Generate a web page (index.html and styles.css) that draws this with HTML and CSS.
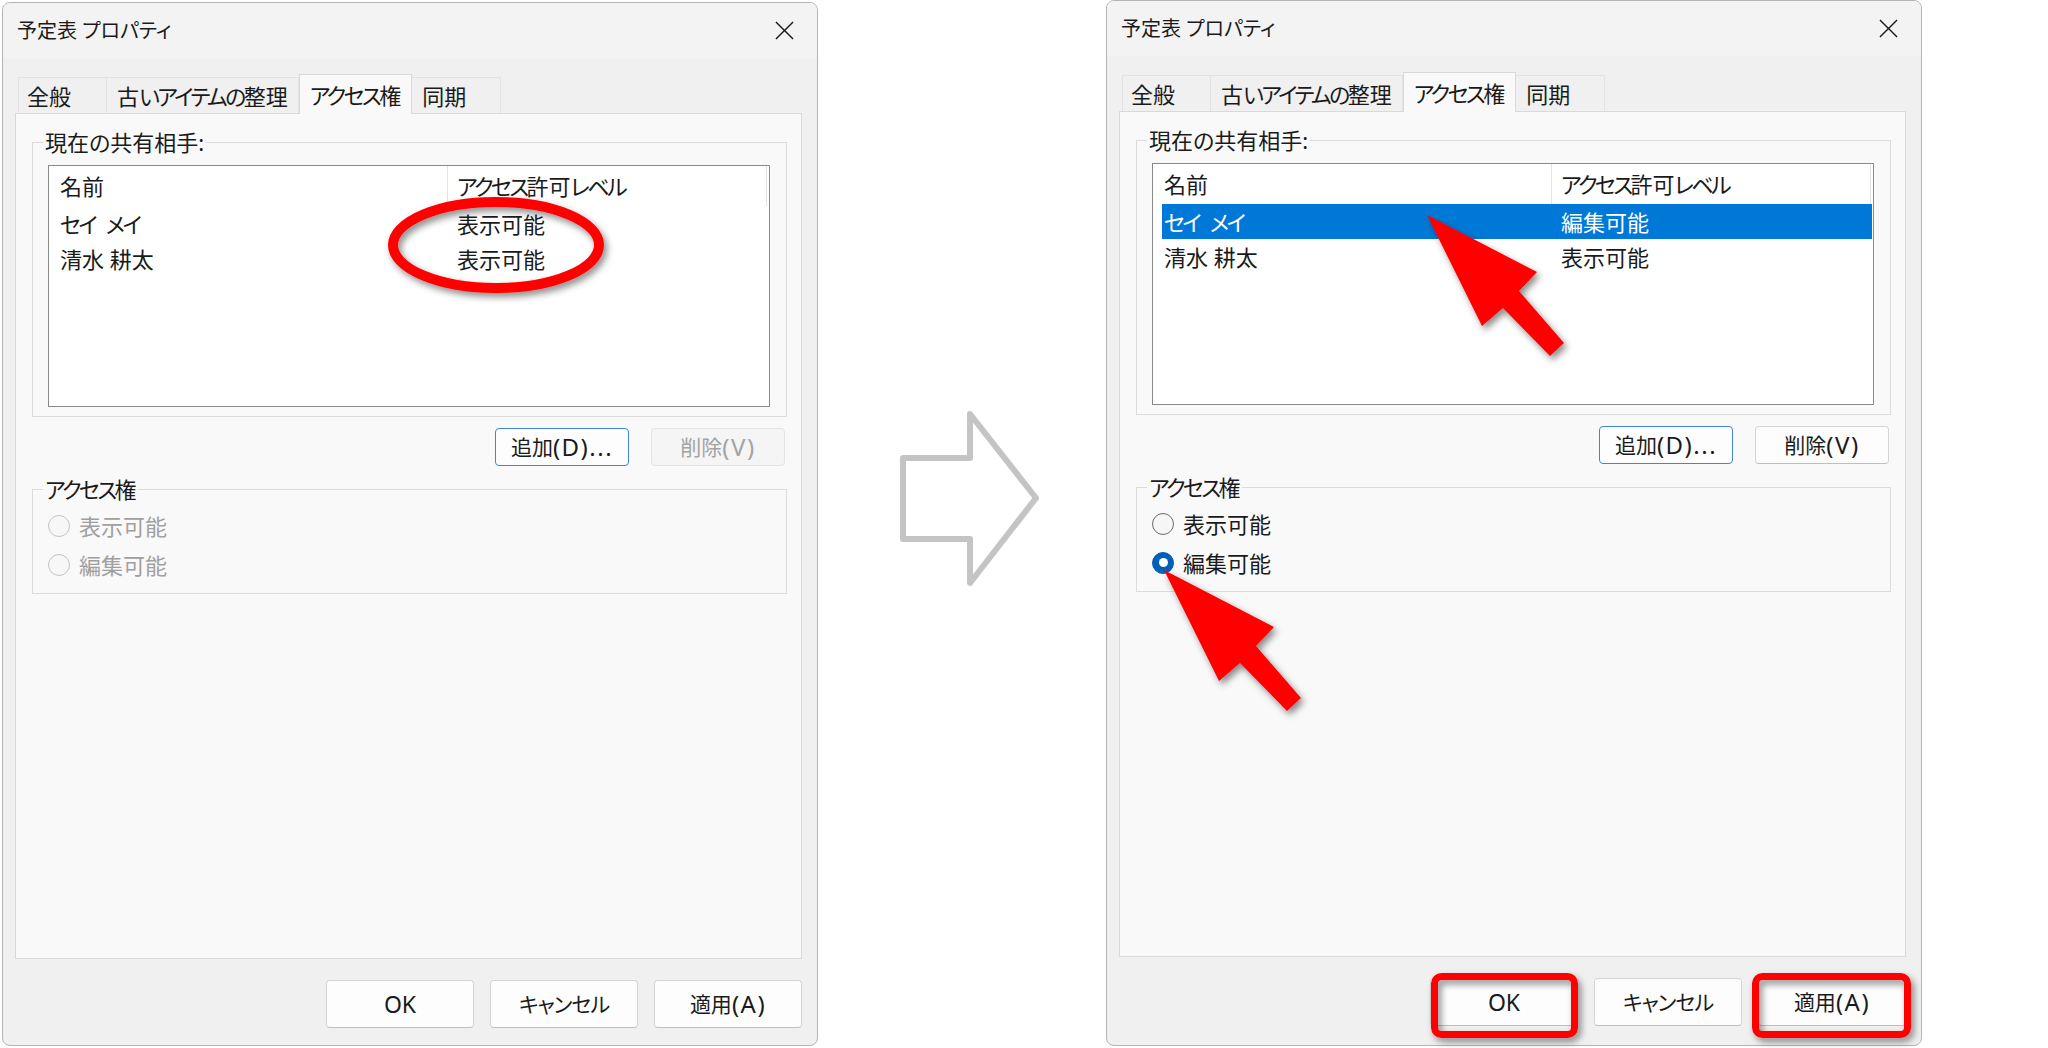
FILE: index.html
```html
<!DOCTYPE html>
<html lang="ja">
<head>
<meta charset="utf-8">
<title>予定表 プロパティ</title>
<link rel="stylesheet" href="styles.css">
</head>
<body>
<div class="page">
  <section class="dialog d1">
    <header class="titlebar">
      <span class="title">予定表 プロパティ</span>
      <svg class="close" viewBox="0 0 20 20"><path d="M1 1L19 19M19 1L1 19"/></svg>
    </header>
    <nav class="tabs">
      <span class="tab">全般</span>
      <span class="tab">古<span class="k">いアイテムの</span>整理</span>
      <span class="tab active"><span class="k">アクセス</span>権</span>
      <span class="tab">同期</span>
    </nav>
    <div class="panel">
      <fieldset class="group share">
        <legend>現在の共有相手:</legend>
        <div class="list">
          <div class="lrow lhead"><span>名前</span><span><span class="k">アクセス</span>許可<span class="k">レベル</span></span></div>
          <div class="lrow"><span class="name"><span class="k">セイ</span> <span class="k">メイ</span></span><span>表示可能</span></div>
          <div class="lrow"><span>清水 耕太</span><span>表示可能</span></div>
        </div>
      </fieldset>
      <div class="actions">
        <button class="btn default">追加<span class="lat">(D)...</span></button>
        <button class="btn" disabled>削除<span class="lat">(V)</span></button>
      </div>
      <fieldset class="group perms disabled">
        <legend><span class="k">アクセス</span>権</legend>
        <label class="opt"><span class="radio"></span>表示可能</label>
        <label class="opt"><span class="radio"></span>編集可能</label>
      </fieldset>
    </div>
    <footer class="footer">
      <button class="btn big"><span class="lat ok">OK</span></button>
      <button class="btn big"><span class="k2">キャンセル</span></button>
      <button class="btn big">適用<span class="lat">(A)</span></button>
    </footer>
  </section>

  <div class="between">
    <svg class="flow-arrow" width="150" height="190" viewBox="0 0 150 190">
      <polygon points="6,52 73,52 73,8 139,92 73,177 73,133 6,133"/>
    </svg>
  </div>

  <section class="dialog d2">
    <header class="titlebar">
      <span class="title">予定表 プロパティ</span>
      <svg class="close" viewBox="0 0 20 20"><path d="M1 1L19 19M19 1L1 19"/></svg>
    </header>
    <nav class="tabs">
      <span class="tab">全般</span>
      <span class="tab">古<span class="k">いアイテムの</span>整理</span>
      <span class="tab active"><span class="k">アクセス</span>権</span>
      <span class="tab">同期</span>
    </nav>
    <div class="panel">
      <fieldset class="group share">
        <legend>現在の共有相手:</legend>
        <div class="list">
          <div class="lrow lhead"><span>名前</span><span><span class="k">アクセス</span>許可<span class="k">レベル</span></span></div>
          <div class="lrow sel"><span class="name"><span class="k">セイ</span> <span class="k">メイ</span></span><span>編集可能</span></div>
          <div class="lrow"><span>清水 耕太</span><span>表示可能</span></div>
        </div>
      </fieldset>
      <div class="actions">
        <button class="btn default">追加<span class="lat">(D)...</span></button>
        <button class="btn">削除<span class="lat">(V)</span></button>
      </div>
      <fieldset class="group perms">
        <legend><span class="k">アクセス</span>権</legend>
        <label class="opt"><span class="radio"></span>表示可能</label>
        <label class="opt"><span class="radio on"></span>編集可能</label>
      </fieldset>
    </div>
    <footer class="footer">
      <button class="btn big"><span class="lat ok">OK</span></button>
      <button class="btn big"><span class="k2">キャンセル</span></button>
      <button class="btn big">適用<span class="lat">(A)</span></button>
    </footer>
  </section>

  <svg class="overlay" width="2048" height="1048" viewBox="0 0 2048 1048">
    <defs>
      <filter id="sh" x="-30%" y="-30%" width="160%" height="160%">
        <feDropShadow dx="3" dy="4" stdDeviation="3.5" flood-color="#000" flood-opacity="0.45"/>
      </filter>
    </defs>
    <ellipse cx="496" cy="245" rx="103" ry="43" fill="none" stroke="#ff0000" stroke-width="10" filter="url(#sh)"/>
    <polygon transform="translate(1427 215)" points="0,0 55,111 76,93 123,141 137,128 92,76 110,57" fill="#ff0000" filter="url(#sh)"/>
    <polygon transform="translate(1164 570)" points="0,0 55,111 76,93 123,141 137,128 92,76 110,57" fill="#ff0000" filter="url(#sh)"/>
    <rect x="1434.5" y="976.5" width="140" height="58" rx="7" fill="none" stroke="#ff0000" stroke-width="7" filter="url(#sh)"/>
    <rect x="1755.5" y="976.5" width="152" height="58" rx="7" fill="none" stroke="#ff0000" stroke-width="7" filter="url(#sh)"/>
  </svg>
</div>
</body>
</html>
```

FILE: styles.css
```css
* { box-sizing: border-box; }
html, body { margin: 0; padding: 0; }
body {
  background: #ffffff;
  font-family: "Noto Sans", "Noto Sans CJK JP", sans-serif;
  font-feature-settings: "palt";
  color: #1a1a1a;
}
.k { letter-spacing: -2.6px; }
.k2 { letter-spacing: -1px; }
.lat { font-size: 24px; letter-spacing: 1.5px; }
.lat.ok { font-size: 23px; letter-spacing: 0; }
.name { word-spacing: 5px; }

.page {
  position: relative;
  width: 2048px;
  height: 1048px;
  display: flex;
  align-items: flex-start;
  overflow: hidden;
}
.dialog {
  flex: none;
  width: 816px;
  height: 1044px;
  margin: 2px 0 0 2px;
  border: 1px solid #b4b4b4;
  border-radius: 8px;
  background: #f0f0f0;
  display: flex;
  flex-direction: column;
  overflow: hidden;
}
.dialog.d2 { margin: 0; height: 1046px; }

.titlebar {
  flex: none;
  height: 55px;
  background: #f3f3f3;
  display: flex;
  align-items: center;
  justify-content: space-between;
  padding: 0 23px 0 14px;
}
.title { font-size: 20px; line-height: 26px; }
.close { width: 19px; height: 19px; fill: none; stroke: #1a1a1a; stroke-width: 1.5; }

.tabs {
  flex: none;
  height: 55px;
  display: flex;
  align-items: flex-end;
  padding-left: 15px;
  position: relative;
  z-index: 1;
}
.tab {
  height: 36px;
  min-width: 89px;
  padding: 0 10px;
  display: flex;
  align-items: center;
  font-size: 22px;
  line-height: 26px;
  white-space: nowrap;
  background: #f0f0f0;
  border: 1px solid #e3e3e3;
  border-bottom: none;
}
.tab:first-child { padding-left: 8px; }
.tab + .tab { border-left: none; }
.tab.active {
  height: 40px;
  margin-bottom: -1px;
  background: #f9f9f9;
  border: 1px solid #d9d9d9;
  border-bottom: none;
}
.tab.active + .tab { border-left: none; }

.panel {
  flex: none;
  height: 846px;
  margin: 0 15px 0 12px;
  background: #f9f9f9;
  border: 1px solid #d9d9d9;
  padding: 15px 14px 0 16px;
}

.group {
  margin: 0;
  min-width: 0;
  padding: 0 16px 9px 15px;
  border: 1px solid #dcdcdc;
}
.group legend {
  padding: 0 2px;
  margin-left: -5px;
  font-size: 22px;
  line-height: 26px;
}

.list {
  margin-top: 10px;
  height: 242px;
  background: #ffffff;
  border: 1px solid #8a8a8a;
  padding: 0 1px 0 9px;
}
.lrow {
  display: grid;
  grid-template-columns: 389px 1fr;
  height: 35px;
  align-items: center;
  font-size: 22px;
  line-height: 26px;
}
.lrow > span { padding-left: 2px; white-space: nowrap; }
.lrow > span + span { padding-left: 10px; }
.lhead { height: 40px; align-items: stretch; }
.lhead > span { display: flex; align-items: center; }
.lhead > span + span {
  padding-left: 9px;
  margin-right: 1px;
  border-left: 1px solid #e3e3e3;
  border-right: 1px solid #e3e3e3;
}
.lrow.sel { background: #0078d7; color: #ffffff; }

.actions {
  display: flex;
  justify-content: flex-end;
  gap: 22px;
  margin-top: 11px;
  padding-right: 2px;
}
.btn {
  font-family: inherit;
  font-feature-settings: "palt";
  font-size: 21px;
  line-height: 26px;
  color: #1a1a1a;
  background: #fdfdfd;
  border: 1px solid #d5d5d5;
  border-bottom-color: #bfbfbf;
  border-radius: 4px;
  padding: 0;
  display: flex;
  align-items: center;
  justify-content: center;
}
.actions .btn { width: 134px; height: 38px; }
.btn.default { border: 1px solid #3f86d4; }
.btn:disabled {
  color: #a3a3a3;
  background: #f5f5f5;
  border-color: #e4e4e4;
}

.perms { margin-top: 10px; padding-bottom: 9px; }
.opt {
  display: flex;
  align-items: center;
  gap: 9px;
  height: 39px;
  font-size: 22px;
  line-height: 26px;
}
.perms legend + .opt { margin-top: 4px; }
.radio {
  flex: none;
  width: 22px;
  height: 22px;
  border: 1.5px solid #6a6a6a;
  border-radius: 50%;
  background: #f6f6f6;
  display: flex;
  align-items: center;
  justify-content: center;
}
.radio.on { background: #005fb8; border-color: #005fb8; }
.radio.on::after {
  content: "";
  width: 9px;
  height: 9px;
  border-radius: 50%;
  background: #ffffff;
}
.perms.disabled .opt { color: #a0a0a0; }
.perms.disabled .radio { border: 1px solid #c4c4c4; background: #f7f7f7; }

.footer {
  flex: 1;
  display: flex;
  justify-content: flex-end;
  align-items: flex-start;
  gap: 16px;
  padding: 21px 15px 0 0;
}
.footer .btn { width: 148px; height: 48px; }

.between {
  flex: none;
  width: 288px;
  padding: 406px 0 0 79px;
}
.flow-arrow { display: block; }
.flow-arrow polygon {
  fill: none;
  stroke: #c4c4c4;
  stroke-width: 6;
  stroke-linejoin: round;
}

.overlay { position: absolute; left: 0; top: 0; pointer-events: none; }
```
